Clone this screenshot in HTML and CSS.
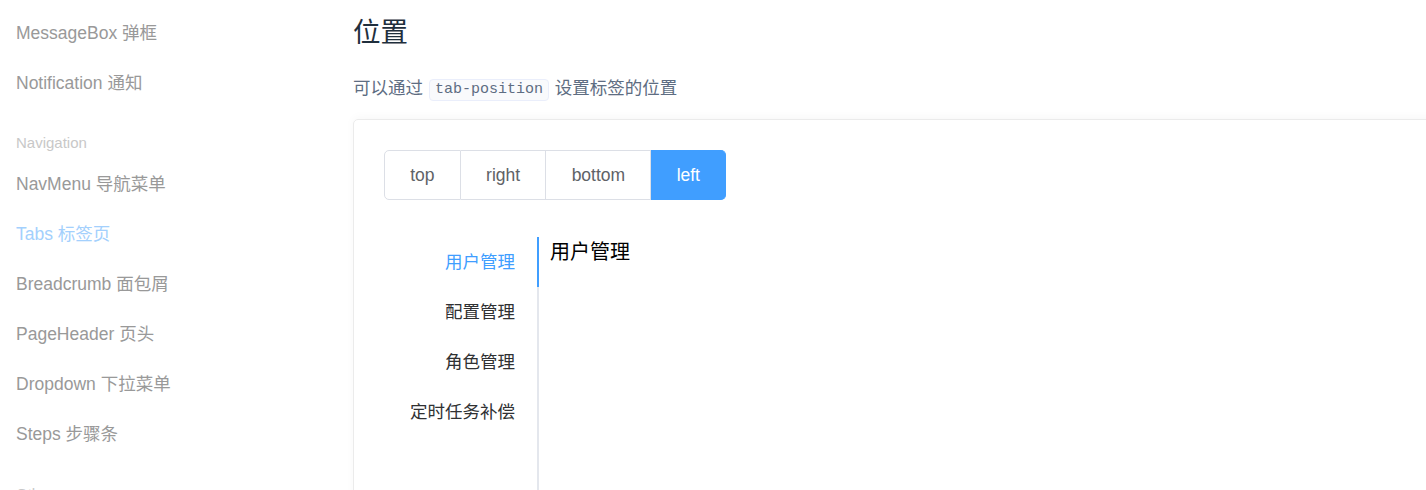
FILE: index.html
```html
<!DOCTYPE html>
<html lang="zh-CN">
<head>
<meta charset="utf-8">
<title>Tabs 标签页</title>
<link rel="stylesheet" href="styles.css">
</head>
<body>
<div class="page">
  <aside class="sidebar">
    <ul class="nav-list">
      <li class="nav-item">MessageBox 弹框</li>
      <li class="nav-item">Notification 通知</li>
    </ul>
    <div class="nav-group">Navigation</div>
    <ul class="nav-list">
      <li class="nav-item">NavMenu 导航菜单</li>
      <li class="nav-item is-active">Tabs 标签页</li>
      <li class="nav-item">Breadcrumb 面包屑</li>
      <li class="nav-item">PageHeader 页头</li>
      <li class="nav-item">Dropdown 下拉菜单</li>
      <li class="nav-item">Steps 步骤条</li>
    </ul>
    <div class="nav-group">Others</div>
  </aside>
  <main class="main">
    <h3 class="title">位置</h3>
    <p class="desc">可以通过 <code class="code">tab-position</code> 设置标签的位置</p>
    <div class="demo">
      <div class="radio-group">
        <span class="radio-btn">top</span>
        <span class="radio-btn">right</span>
        <span class="radio-btn">bottom</span>
        <span class="radio-btn is-active">left</span>
      </div>
      <div class="tabs">
        <div class="tabs-nav">
          <div class="tab is-active">用户管理</div>
          <div class="tab">配置管理</div>
          <div class="tab">角色管理</div>
          <div class="tab">定时任务补偿</div>
        </div>
        <div class="tabs-content">用户管理</div>
      </div>
    </div>
  </main>
</div>
</body>
</html>
```
FILE: styles.css
```css
* { box-sizing: border-box; }
html, body {
  margin: 0;
  padding: 0;
  background: #fff;
  overflow: hidden;
  height: 490px;
}
body {
  font-family: "Liberation Sans", Arial, "Noto Sans CJK SC", sans-serif;
}
.page {
  display: flex;
  width: 1426px;
}
.sidebar {
  width: 353px;
  flex: none;
  padding: 8px 0 0 16px;
}
.nav-list {
  list-style: none;
  margin: 0;
  padding: 0;
}
.nav-item {
  height: 50px;
  line-height: 50px;
  font-size: 17.5px;
  color: #999;
  white-space: nowrap;
}
.nav-item.is-active {
  color: #a3d0fd;
}
.nav-group {
  margin-top: 18.75px;
  height: 32.5px;
  line-height: 32.5px;
  font-size: 15px;
  color: #c8c8c8;
}
.main {
  flex: 1;
  min-width: 0;
  padding-top: 13px;
}
.title {
  margin: 0;
  height: 40px;
  line-height: 40px;
  font-size: 27.5px;
  font-weight: 400;
  color: #1f2f3d;
}
.desc {
  margin: 22px 0 0;
  height: 26px;
  line-height: 26px;
  font-size: 17.5px;
  color: #5e6d82;
}
.code {
  display: inline-block;
  height: 22px;
  line-height: 20px;
  padding: 0 5px;
  margin: 0 1px;
  font-family: "Liberation Mono", "Courier New", monospace;
  font-size: 15px;
  color: #5e6d82;
  background: #f9fafc;
  border: 1px solid #eaeefb;
  border-radius: 4px;
  vertical-align: 1px;
}
.demo {
  margin-top: 18px;
  width: calc(100% + 20px);
  height: 400px;
  border: 1px solid #ebebeb;
  border-radius: 5px;
  box-shadow: 0 -2px 10px rgba(0, 0, 0, 0.03);
  padding: 30px;
}
.radio-group {
  display: flex;
}
.radio-btn {
  height: 50px;
  line-height: 48px;
  padding: 0 25.25px;
  font-size: 17.5px;
  color: #606266;
  border: 1px solid #dcdfe6;
  border-left: 0;
  background: #fff;
}
.radio-btn:first-child {
  border-left: 1px solid #dcdfe6;
  border-radius: 5px 0 0 5px;
}
.radio-btn:last-child {
  border-radius: 0 5px 5px 0;
}
.radio-btn.is-active {
  background: #409eff;
  border-color: #409eff;
  color: #fff;
}
.tabs {
  display: flex;
  margin-top: 37px;
  height: 312px;
}
.tabs-nav {
  width: 155px;
  flex: none;
  border-right: 2px solid #e4e7ed;
  font-family: "Noto Sans CJK SC", sans-serif;
}
.tab {
  position: relative;
  height: 50px;
  line-height: 47px;
  padding: 0 22px 0 25px;
  text-align: right;
  font-size: 17.5px;
  color: #303133;
}
.tab.is-active {
  color: #409eff;
}
.tab.is-active::after {
  content: "";
  position: absolute;
  top: 0;
  right: -2px;
  width: 2px;
  height: 50px;
  background: #409eff;
}
.tabs-content {
  margin-left: 11px;
  font-family: "Noto Sans CJK SC", sans-serif;
  font-size: 20px;
  line-height: 28px;
  color: #000;
}
```
